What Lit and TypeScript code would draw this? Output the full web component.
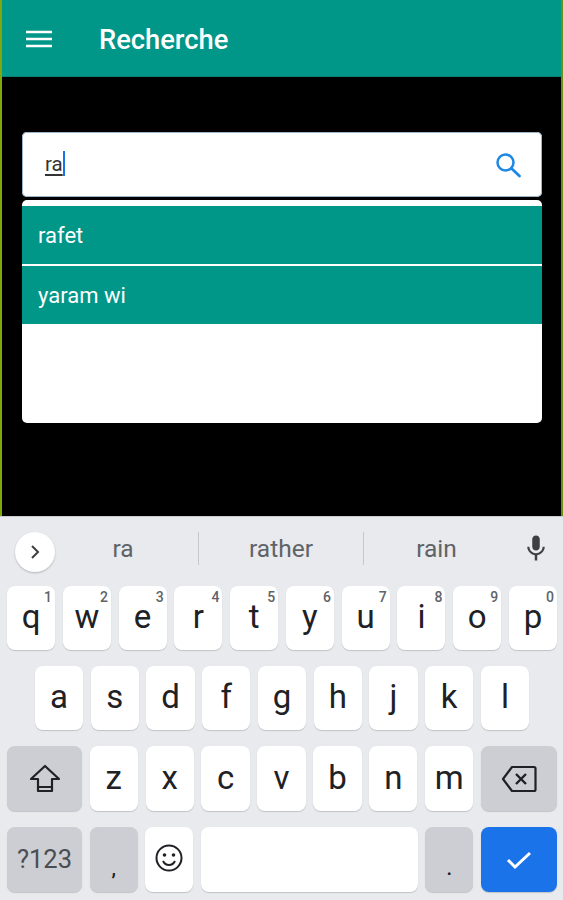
import { LitElement, html, css, svg } from 'lit'
import { customElement, property } from 'lit/decorators.js'

const mic = svg`<path fill="#3c4043" d="M12 14c1.7 0 3-1.3 3-3V5c0-1.7-1.3-3-3-3S9 3.300 9 5v6c0 1.700 1.300 3 3 3z"/><path fill="#3c4043" d="M17.300 11c0 3-2.500 5.100-5.300 5.100S6.700 14 6.700 11H5c0 3.400 2.700 6.200 6 6.700V22h2v-4.300c3.300-.5 6-3.300 6-6.700h-1.700z"/>`

@customElement('kb-key')
export class KbKey extends LitElement {
  @property() hint = ''
  @property() kind = 'letter'

  static styles = css`
    :host {
      display: block;
    }

    .key {
      position: relative;
      display: flex;
      align-items: center;
      justify-content: center;
      height: 100%;
      box-sizing: border-box;
      border-radius: 8px;
      background: #fff;
      box-shadow: 0 1px 1px rgba(60, 64, 67, 0.22);
      color: #202124;
      font-size: 33px;
      line-height: 1;
    }

    .letter {
      padding-bottom: 3px;
    }

    .fn {
      background: #ccced3;
      font-size: 25.5px;
      color: #4a4d52;
    }

    .action {
      background: #1a73e8;
    }

    .hint {
      position: absolute;
      top: 4px;
      right: 3px;
      font-size: 14px;
      line-height: 14px;
      font-weight: 500;
      color: #5f6368;
    }
  `

  render() {
    return html`
      <div class="key ${this.kind}">
        <slot></slot>
        ${this.hint ? html`<span class="hint">${this.hint}</span>` : ''}
      </div>
    `
  }
}

@customElement('app-root')
export class AppRoot extends LitElement {
  static styles = css`
    :host {
      display: flex;
      flex-direction: column;
      width: 563px;
      height: 900px;
      overflow: hidden;
      font-family: Roboto, "Liberation Sans", sans-serif;
      background: #000;
    }

    .screen {
      display: flex;
      flex-direction: column;
      height: 516px;
      box-sizing: border-box;
      border-left: 2px solid #7fa80f;
      border-right: 2px solid #6f8f14;
    }

    .bar {
      display: flex;
      align-items: center;
      gap: 47px;
      height: 77px;
      flex: none;
      padding: 4px 0 0 24px;
      box-sizing: border-box;
      background: #009688;
      border-bottom: 1px solid #0a7f73;
      color: #fff;
      font-size: 27.3px;
      font-weight: 500;
    }

    .bar svg {
      display: block;
      margin-top: -2px;
    }

    .content {
      display: flex;
      flex-direction: column;
      gap: 3px;
      padding: 55px 19px 0 20px;
    }

    .search {
      display: flex;
      align-items: center;
      justify-content: space-between;
      height: 65px;
      box-sizing: border-box;
      padding: 0 20px 0 23px;
      border-radius: 5px;
      background: #fff;
      box-shadow: inset 0 0 0 1px #9db4c9;
    }

    .query {
      display: flex;
      align-items: center;
      margin-bottom: 2px;
      font-size: 20.500px;
      color: #333;
    }

    .query u {
      text-underline-offset: 3px;
    }

    .caret {
      width: 2px;
      height: 25px;
      background: #1a73e8;
    }

    .results {
      height: 223px;
      box-sizing: border-box;
      padding-top: 6px;
      border-radius: 5px;
      background: #fff;
      overflow: hidden;
    }

    .item {
      display: flex;
      align-items: center;
      height: 58px;
      padding-left: 16px;
      background: #009688;
      color: #fff;
      font-size: 22px;
    }

    .item + .item {
      margin-top: 2px;
    }

    .keyboard {
      display: flex;
      flex-direction: column;
      flex: 1;
      box-sizing: border-box;
      padding: 0 6px 8px 7px;
      background: #e8eaed;
      border-top: 1px solid #c9cbce;
    }

    .suggest {
      display: flex;
      align-items: center;
      height: 69px;
      margin-right: -6px;
    }

    .more {
      display: flex;
      align-items: center;
      justify-content: center;
      flex: none;
      width: 40px;
      height: 40px;
      margin: 0 0 0 8px;
      border-radius: 50%;
      background: #fff;
      box-shadow: 0 1px 2px rgba(60, 64, 67, 0.3);
    }

    .words {
      display: grid;
      grid-template-columns: 150px 165px 146px;
      align-items: center;
      flex: none;
      margin: 0 0 7px -7px;
      color: #5f6368;
      font-size: 24.5px;
    }

    .word {
      text-align: center;
      height: 33px;
      line-height: 33px;
    }

    .word + .word {
      border-left: 1px solid #c4c7cb;
    }

    .mic {
      flex: none;
      margin: 0 0 8px 12px;
    }

    .rows {
      display: flex;
      flex-direction: column;
      gap: 16px;
    }

    .row {
      display: grid;
      grid-template-columns: repeat(10, 1fr);
      column-gap: 7.7px;
      height: 64px;
    }

    .row.home {
      grid-template-columns: repeat(9, 1fr);
      padding: 0 28px;
    }

    .row.third {
      grid-template-columns: 75px repeat(7, 1fr) 76px;
      height: 65px;
    }

    .row.last {
      grid-template-columns: 75px 48px 48px 1fr 48px 76px;
      height: 65px;
    }

    .mark {
      padding-top: 16px;
      font-size: 20px;
      font-weight: 500;
      color: #202124;
    }
  `

  render() {
    const top = [['q', '1'], ['w', '2'], ['e', '3'], ['r', '4'], ['t', '5'], ['y', '6'], ['u', '7'], ['i', '8'], ['o', '9'], ['p', '0']]
    return html`
      <div class="screen">
        <header class="bar">
          <svg width="26" height="18" viewBox="0 0 26 18"><path fill="none" stroke="#fff" stroke-width="2.600" d="M0 2h26M0 9h26M0 16h26"/></svg>
          <span>Recherche</span>
        </header>
        <div class="content">
          <div class="search">
            <div class="query"><u>ra</u><span class="caret"></span></div>
            <svg width="28" height="28" viewBox="0 0 28 28"><circle cx="11.500" cy="11.500" r="8" fill="none" stroke="#1e88e5" stroke-width="2.500"/><path d="M17.500 17.500l8 7.500" fill="none" stroke="#1e88e5" stroke-width="2.800" stroke-linecap="round"/></svg>
          </div>
          <div class="results">
            <div class="item">rafet</div>
            <div class="item">yaram wi</div>
          </div>
        </div>
      </div>
      <div class="keyboard">
        <div class="suggest">
          <div class="more"><svg width="14" height="18" viewBox="0 0 14 18"><path d="M4 3l6 6-6 6" fill="none" stroke="#3c4043" stroke-width="2"/></svg></div>
          <div class="words">
            <div class="word">ra</div>
            <div class="word">rather</div>
            <div class="word">rain</div>
          </div>
          <svg class="mic" width="30" height="30" viewBox="0 0 24 24">${mic}</svg>
        </div>
        <div class="rows">
          <div class="row">
            ${top.map(([k, n]) => html`<kb-key hint=${n}>${k}</kb-key>`)}
          </div>
          <div class="row home">
            ${'asdfghjkl'.split('').map((k) => html`<kb-key>${k}</kb-key>`)}
          </div>
          <div class="row third">
            <kb-key kind="fn"><svg width="32" height="30" viewBox="0 0 32 30"><path d="M16 2L2 15h7v12h14V15h7z" fill="none" stroke="#202124" stroke-width="2.200" stroke-linejoin="round"/><path d="M9 23h14" stroke="#202124" stroke-width="2"/></svg></kb-key>
            ${'zxcvbnm'.split('').map((k) => html`<kb-key>${k}</kb-key>`)}
            <kb-key kind="fn"><svg width="36" height="28" viewBox="0 0 36 28"><path d="M11 2h22a1.500 1.500 0 0 1 1.500 1.500v21A1.500 1.500 0 0 1 33 26H11L2 14z" fill="none" stroke="#202124" stroke-width="2.200" stroke-linejoin="round"/><path d="M15 9l10 10M25 9L15 19" stroke="#202124" stroke-width="2.400"/></svg></kb-key>
          </div>
          <div class="row last">
            <kb-key kind="fn">?123</kb-key>
            <kb-key kind="fn"><span class="mark">,</span></kb-key>
            <kb-key><svg width="28" height="28" viewBox="0 0 28 28"><circle cx="14" cy="14" r="12.500" fill="none" stroke="#202124" stroke-width="2"/><circle cx="9.500" cy="11" r="1.800" fill="#202124"/><circle cx="18.500" cy="11" r="1.800" fill="#202124"/><path d="M8 17c1.500 3 3.500 4 6 4s4.500-1 6-4" fill="none" stroke="#202124" stroke-width="2"/></svg></kb-key>
            <kb-key></kb-key>
            <kb-key kind="fn"><span class="mark">.</span></kb-key>
            <kb-key kind="action"><svg width="26" height="20" viewBox="0 0 26 20"><path d="M2 10l7 7L24 3" fill="none" stroke="#fff" stroke-width="3"/></svg></kb-key>
          </div>
        </div>
      </div>
    `
  }
}

declare global {
  interface HTMLElementTagNameMap {
    'app-root': AppRoot
    'kb-key': KbKey
  }
}
